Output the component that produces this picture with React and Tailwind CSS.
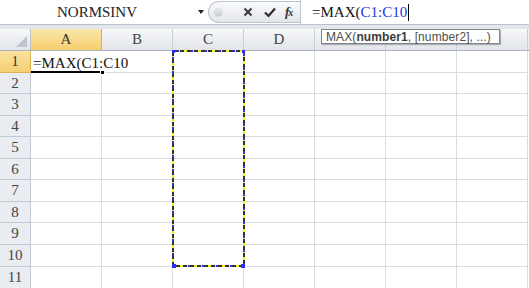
import React from "react";

const serif = { fontFamily: '"Liberation Serif", "Times New Roman", serif' };
const rowHeights = [22, 21, 22, 21, 22, 21, 22, 21, 22, 22, 22];
const cols = ["A", "B", "C", "D", "", "", ""];

function Cell({ noRight }) {
  return (
    <div
      className={`w-[71px] shrink-0 border-b border-[#dadcdd] ${noRight ? "" : "border-r"}`}
    />
  );
}

export default function App() {
  return (
    <div className="relative w-[529px] h-[288px] overflow-hidden bg-white" style={serif}>
      {/* formula bar */}
      <div className="flex h-[25px] border-b border-[#b9c1cc] bg-white">
        <div className="w-[194px] flex items-center justify-center text-[15px] text-[#222] pt-[1px]">
          NORMSINV
        </div>
        <div className="w-[14px] flex items-center justify-center">
          <div className="w-0 h-0 border-l-[3px] border-r-[3px] border-t-[4px] border-l-transparent border-r-transparent border-t-[#222]" />
        </div>
        <div className="mt-[1px] h-[22px] w-[92px] flex items-center rounded-l-[11px] border border-r-0 border-[#bcc3cc] bg-gradient-to-b from-[#fafbfc] to-[#e2e5e9]">
          <div className="ml-[5px] w-[9px] h-[9px] rounded-full bg-gradient-to-b from-[#e9ecef] to-[#c6cbd1] border border-[#d2d6db]" />
          <svg width="10" height="10" viewBox="0 0 10 10" className="ml-[20px]">
            <path d="M1.5 1.5 L8.5 8.5 M8.5 1.5 L1.5 8.5" stroke="#3a3a3a" strokeWidth="2" />
          </svg>
          <svg width="12" height="11" viewBox="0 0 12 11" className="ml-[11px]">
            <path d="M1 5.5 L4.5 9 L11 1.5" stroke="#2b2b2b" strokeWidth="2.2" fill="none" />
          </svg>
          <span className="ml-[9px] text-[13px] italic font-bold text-[#333] tracking-[-1px]">
            f<span className="text-[10px]">x</span>
          </span>
        </div>
        <div className="flex-1 border-l border-[#bcc3cc] flex items-center pl-[11px] text-[15px] text-[#111] pt-[1px]">
          <span>=MAX(</span>
          <span className="text-[#2233dd]">C1:C10</span>
          <span className="ml-[1px] w-[1px] h-[17px] bg-black" />
        </div>
      </div>
      <div className="h-[4px] bg-[#e3e6ea]" />

      {/* header row */}
      <div className="flex h-[22px] border-b border-[#a9b2bd] bg-gradient-to-b from-[#f7f8fa] to-[#e2e5e9]">
        <div className="relative w-[31px] shrink-0 border-r border-[#bcc3cc]">
          <div
            className="absolute right-[3px] bottom-[3px] w-0 h-0"
            style={{ borderBottom: "11px solid #bfc4ca", borderLeft: "11px solid transparent" }}
          />
        </div>
        {cols.map((c, i) => (
          <div
            key={i}
            className={`w-[71px] shrink-0 flex items-center justify-center border-r text-[15px] ${
              i === 0
                ? "bg-gradient-to-b from-[#fbe7a9] to-[#f5cf6d] border-[#d9b455] text-[#333]"
                : "border-[#c9ced5] text-[#444]"
            }`}
          >
            {c}
          </div>
        ))}
      </div>

      {/* rows */}
      {rowHeights.map((h, r) => (
        <div key={r} className="flex" style={{ height: h }}>
          <div
            className={`w-[31px] shrink-0 flex items-center justify-center border-r border-b text-[15px] ${
              r === 0
                ? "bg-gradient-to-b from-[#fbe3a0] to-[#f4cf72] border-[#d9b455] text-[#333]"
                : "bg-[#e9ecf0] border-[#c3c9d1] text-[#444]"
            }`}
          >
            {r + 1}
          </div>
          {r === 0 ? (
            <>
              <div className="relative w-[71px] shrink-0 border-b-2 border-black">
                <span className="absolute left-[2px] top-[1px] whitespace-nowrap text-[15px] text-[#111]">
                  =MAX(C1:C10
                </span>
                <div className="absolute right-[-3px] bottom-[-4px] w-[5px] h-[5px] bg-black border border-white" />
              </div>
              {cols.slice(1).map((c, i) => (
                <Cell key={i} />
              ))}
            </>
          ) : (
            cols.map((c, i) => <Cell key={i} />)
          )}
        </div>
      ))}

      {/* marching ants around C1:C10 */}
      <svg
        className="absolute left-[172px] top-[50px]"
        width="74"
        height="218"
        viewBox="0 0 74 218"
      >
        <rect x="1" y="1" width="71" height="215" fill="none" stroke="#f2ee1a" strokeWidth="2" />
        <rect x="1" y="1" width="71" height="215" fill="none" stroke="#3535f0" strokeWidth="2" strokeDasharray="2 12" strokeDashoffset="-4" />
        <rect x="1" y="1" width="71" height="215" fill="none" stroke="#333333" strokeWidth="2" strokeDasharray="4 3" />
        <rect x="0" y="0" width="3" height="3" fill="#2d2dff" />
        <rect x="70" y="0" width="3" height="3" fill="#2d2dff" />
        <rect x="0" y="214" width="4" height="4" fill="#2d2dff" />
        <rect x="69" y="214" width="4" height="4" fill="#2d2dff" />
      </svg>

      {/* tooltip */}
      <div
        className="absolute left-[321px] top-[29px] w-[179px] h-[15px] border border-[#7d8590] bg-white flex items-center pl-[4px] text-[12px] tracking-[0.1px] leading-none text-[#4e4e4e] shadow-[1px_1px_1px_rgba(0,0,0,0.25)] whitespace-nowrap"
        style={{ fontFamily: '"Liberation Sans", Arial, sans-serif' }}
      >
        MAX(<span className="font-bold text-[#3c3c3c]">number1</span>, [number2], ...)
      </div>
    </div>
  );
}
